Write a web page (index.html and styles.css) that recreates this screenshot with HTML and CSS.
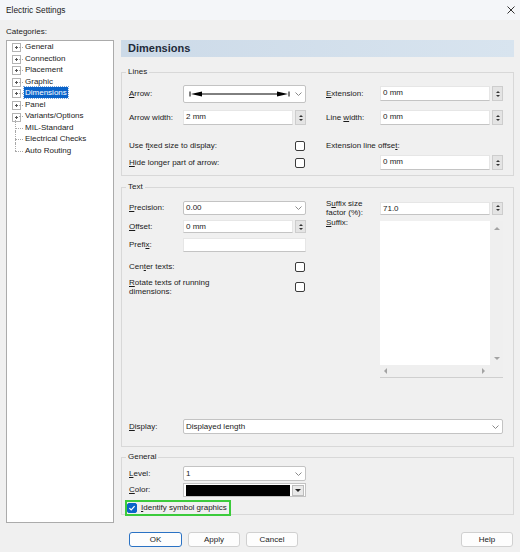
FILE: index.html
```html
<!DOCTYPE html>
<html lang="en">
<head>
	<meta charset="UTF-8">
	<title>Electric Settings</title>
	<link rel="stylesheet" href="styles.css">
</head>
<body>
	<div class="titlebar">
		<span class="title">Electric Settings</span>
		<svg class="close" width="8" height="8" viewBox="0 0 8 8"><path d="M0.5 0.5L7.5 7.5M7.5 0.5L0.5 7.5" stroke="#333" stroke-width="1"/></svg>
	</div>

	<div class="cat-label">Categories:</div>

	<div class="main">
		<ul class="tree">
			<li class="node"><span>General</span></li>
			<li class="node"><span>Connection</span></li>
			<li class="node"><span>Placement</span></li>
			<li class="node"><span>Graphic</span></li>
			<li class="node"><span class="sel">Dimensions</span></li>
			<li class="node"><span>Panel</span></li>
			<li class="node"><span>Variants/Options</span></li>
			<li class="leaf"><span>MIL-Standard</span></li>
			<li class="leaf"><span>Electrical Checks</span></li>
			<li class="leaf last"><span>Auto Routing</span></li>
		</ul>

		<div class="page">
			<div class="page-head">Dimensions</div>

			<!-- Lines -->
			<fieldset class="group lines">
				<legend>Lines</legend>
				<div class="row r1">
					<label><u>A</u>rrow:</label>
					<div class="combo arrow">
						<svg width="110" height="10" viewBox="0 0 110 10">
							<path d="M6 2.5v5M105 2.5v5M18 5H93" stroke="#000" stroke-width="1"/>
							<path d="M7 5L18 2.5V7.5Z M104 5L93 2.5V7.5Z" fill="#000"/>
						</svg>
						<svg class="chev" width="7" height="4" viewBox="0 0 7 4"><path d="M0.5 0.5 3.5 3.5 6.5 0.5" fill="none" stroke="#8a8a8a"/></svg>
					</div>
					<span></span>
					<label><u>E</u>xtension:</label>
					<div class="spin"><div class="field">0 mm</div><div class="btns"><i class="up"></i><i class="dn"></i></div></div>
				</div>
				<div class="row r2">
					<label>Arrow width:</label>
					<div class="spin"><div class="field">2 mm</div><div class="btns"><i class="up"></i><i class="dn"></i></div></div>
					<span></span>
					<label>Line <u>w</u>idth:</label>
					<div class="spin"><div class="field">0 mm</div><div class="btns"><i class="up"></i><i class="dn"></i></div></div>
				</div>
				<div class="row r3">
					<div class="check"><span>Use f<u>i</u>xed size to display:</span><i class="cb"></i></div>
					<span></span>
					<label class="wide">Extension line offse<u>t</u>:</label>
				</div>
				<div class="row r4">
					<div class="check"><span><u>H</u>ide longer part of arrow:</span><i class="cb"></i></div>
					<span></span>
					<span></span>
					<div class="spin"><div class="field">0 mm</div><div class="btns"><i class="up"></i><i class="dn"></i></div></div>
				</div>
			</fieldset>

			<!-- Text -->
			<fieldset class="group text">
				<legend>Text</legend>
				<div class="text-grid">
					<label class="c1 t1"><u>P</u>recision:</label>
					<div class="combo small c2 t1">0.00<svg class="chev" width="7" height="4" viewBox="0 0 7 4"><path d="M0.5 0.5 3.5 3.5 6.5 0.5" fill="none" stroke="#8a8a8a"/></svg></div>
					<label class="c4 t1 two">S<u>u</u>ffix size<br>factor (%):</label>
					<div class="spin small c5 t1"><div class="field">71.0</div><div class="btns"><i class="up"></i><i class="dn"></i></div></div>

					<label class="c1 t2"><u>O</u>ffset:</label>
					<div class="spin small c2 t2"><div class="field">0 mm</div><div class="btns"><i class="up"></i><i class="dn"></i></div></div>
					<label class="c4 t2 top"><u>S</u>uffix:</label>
					<div class="suffix c5">
						<div class="area"></div>
						<div class="vscroll"><i class="sa up"></i><i class="sa dn"></i></div>
						<div class="hscroll"><i class="sa lt"></i><i class="sa rt"></i></div>
						<div class="corner"></div>
					</div>

					<label class="c1 t3">Prefi<u>x</u>:</label>
					<div class="field c2 t3 tall"></div>

					<div class="check t4"><span>Cen<u>t</u>er texts:</span><i class="cb"></i></div>
					<div class="check t5"><span class="two"><u>R</u>otate texts of running<br>dimensions:</span><i class="cb"></i></div>

					<label class="c1 t7"><u>D</u>isplay:</label>
					<div class="combo display t7">Displayed length<svg class="chev" width="7" height="4" viewBox="0 0 7 4"><path d="M0.5 0.5 3.5 3.5 6.5 0.5" fill="none" stroke="#8a8a8a"/></svg></div>
				</div>
			</fieldset>

			<!-- General -->
			<fieldset class="group general">
				<legend>General</legend>
				<div class="row g1">
					<label><u>L</u>evel:</label>
					<div class="combo">1<svg class="chev" width="7" height="4" viewBox="0 0 7 4"><path d="M0.5 0.5 3.5 3.5 6.5 0.5" fill="none" stroke="#8a8a8a"/></svg></div>
				</div>
				<div class="row g2">
					<label><u>C</u>olor:</label>
					<div class="colorpick"><div class="swatch"></div><div class="drop"><i></i></div></div>
				</div>
				<div class="row g3">
					<div class="highlight">
						<i class="cb on"><svg width="10" height="10" viewBox="0 0 10 10"><path d="M2.4 5.2 4.2 7 7.6 3.2" fill="none" stroke="#fff" stroke-width="1.2"/></svg></i>
						<span><u>I</u>dentify symbol graphics</span>
					</div>
				</div>
			</fieldset>
		</div>
	</div>

	<div class="buttons">
		<span class="btn ok">OK</span>
		<span class="btn">Apply</span>
		<span class="btn">Cancel</span>
		<span class="btn help">Help</span>
	</div>
</body>
</html>
```

FILE: styles.css
```css
* {
	box-sizing: border-box;
}

body {
	margin: 0;
	width: 520px;
	height: 552px;
	overflow: hidden;
	background: #f0f0f0;
	font: 8px/10px "Liberation Sans", Arial, sans-serif;
	color: #1b1b1b;
}

u {
	text-decoration: underline;
}

label {
	white-space: nowrap;
}

/* title bar */
.titlebar {
	height: 20px;
	background: #f4f6f9;
	display: flex;
	align-items: center;
	justify-content: space-between;
	padding: 0 5px 0 6px;
}

.title {
	font-size: 8.3px;
}

.cat-label {
	padding: 6px 6px 2px;
	line-height: 12px;
}

.main {
	display: grid;
	grid-template-columns: 108px 393px;
	column-gap: 7px;
	padding: 0 6px;
}

/* category tree */
.tree {
	margin: 0;
	padding: 0;
	list-style: none;
	background: #fff;
	border: 1px solid #ababab;
	height: 483px;
}

.tree li {
	position: relative;
	height: 11.55px;
	line-height: 11.55px;
	padding-left: 17px;
	white-space: nowrap;
}

.tree li span {
	padding: 1px 1px;
}

.tree li .sel {
	background: #0a63c9;
	color: #fff;
	outline: 1px dotted #7aa7dd;
}

.tree .node::before {
	content: "";
	position: absolute;
	left: 5px;
	top: 2.3px;
	width: 7px;
	height: 7px;
	border: 1px solid #b4b4b4;
	background:
		linear-gradient(#555, #555) center / 3px 1px no-repeat,
		linear-gradient(#555, #555) center / 1px 3px no-repeat,
		#fff;
}

.tree .node::after {
	content: "";
	position: absolute;
	left: 12px;
	top: 6px;
	width: 4px;
	border-top: 1px dotted #a8a8a8;
}

.tree .leaf::before {
	content: "";
	position: absolute;
	left: 8px;
	top: -2px;
	height: calc(100% + 2px);
	border-left: 1px dotted #a8a8a8;
}

.tree .leaf.last::before {
	height: 8px;
}

.tree .leaf::after {
	content: "";
	position: absolute;
	left: 8px;
	top: 6px;
	width: 8px;
	border-top: 1px dotted #a8a8a8;
}

/* right page */
.page-head {
	height: 17px;
	background: linear-gradient(90deg, #ccdae8, #d8e4ef);
	font: bold 11px/17px "Liberation Sans", Arial, sans-serif;
	color: #1f2b3a;
	padding-left: 7px;
}

.group {
	margin: 10px 0 0;
	padding: 7px 10px 4px 7px;
	border: 1px solid #d8d8d8;
	min-width: 0;
}

.group legend {
	padding: 0 2px;
	margin-left: -3px;
	line-height: 10px;
}

.group.text {
	margin-top: 6px;
	padding-bottom: 10px;
}

.group.general {
	margin-top: 5px;
	padding-top: 3px;
	padding-bottom: 0;
}

.row {
	display: grid;
	grid-template-columns: 54px 123px 20px 54px 123px;
	align-items: center;
}

.r1 {
	height: 19px;
}

.r2 {
	height: 19px;
	margin-top: 5px;
}

.r3 {
	height: 16px;
	margin-top: 11px;
}

.r4 {
	height: 17px;
}

.g1 {
	height: 17px;
}

.g2 {
	height: 16px;
}

.g3 {
	height: 16px;
}

.wide {
	grid-column: 4 / 6;
}

.check {
	grid-column: 1 / 3;
	display: flex;
	align-items: center;
	justify-content: space-between;
	padding-right: 1px;
}

/* controls */
.field {
	height: 15px;
	background: #fff;
	border: 1px solid #e6e6e6;
	border-bottom-color: #c4c4c4;
	padding-left: 2px;
	line-height: 13px;
}

.field.tall {
	height: 14px;
}

.combo {
	height: 15px;
	background: #fff;
	border: 1px solid #c3c3c3;
	border-radius: 2px;
	display: flex;
	align-items: center;
	padding-left: 2px;
}

.combo.arrow {
	height: 18px;
	padding-left: 0;
}

.combo.small {
	height: 14px;
}

.combo .chev {
	margin-left: auto;
	margin-right: 3px;
}

.spin {
	display: flex;
	height: 15px;
}

.spin.small {
	height: 13px;
}

.spin .field {
	flex: 1;
	height: 100%;
	line-height: 12px;
}

.spin .btns {
	width: 11px;
	margin-left: 2px;
	background: #e4e4e4;
	border: 1px solid #cdcdcd;
	display: flex;
	flex-direction: column;
	align-items: center;
	justify-content: center;
	gap: 2px;
}

.btns i {
	display: block;
	width: 0;
	height: 0;
	border-left: 2px solid transparent;
	border-right: 2px solid transparent;
}

.btns .up {
	border-bottom: 2px solid #333;
}

.btns .dn {
	border-top: 2px solid #333;
}

.cb {
	display: block;
	flex: none;
	width: 10px;
	height: 10px;
	border: 1px solid #3b3b3b;
	border-radius: 2px;
	background: #fff;
}

.cb.on {
	background: #0a63c9;
	border-color: #0a63c9;
}

.cb.on svg {
	display: block;
	margin: -1px;
}

/* text group */
.text-grid {
	display: grid;
	grid-template-columns: 54px 123px 20px 54px 123px;
	grid-template-rows: 18px 19px 18px 26px 14px 123px 19px;
	align-items: center;
}

.c1 { grid-column: 1; }
.c2 { grid-column: 2; }
.c4 { grid-column: 4; }
.c5 { grid-column: 5; }
.t1 { grid-row: 1; }
.t2 { grid-row: 2; }
.t3 { grid-row: 3; }
.t4 { grid-row: 4; }
.t5 { grid-row: 5; }
.t7 { grid-row: 7; }

.two {
	line-height: 9px;
}

.top {
	align-self: start;
	margin-top: 1px;
}

.display {
	grid-column: 2 / 6;
}

.suffix {
	grid-row: 2 / 7;
	align-self: start;
	margin-top: 4px;
	height: 157px;
	display: grid;
	grid-template-columns: 1fr 13px;
	grid-template-rows: 1fr 12px;
	background: #fff;
	border-bottom: 1px solid #cfcfcf;
}

.vscroll,
.hscroll,
.corner {
	background: #efefef;
	display: flex;
	justify-content: space-between;
	align-items: center;
}

.vscroll {
	flex-direction: column;
	padding: 6px 0 5px;
}

.hscroll {
	padding: 0 5px 0 4px;
}

.sa {
	display: block;
	width: 0;
	height: 0;
}

.sa.up {
	border-left: 3px solid transparent;
	border-right: 3px solid transparent;
	border-bottom: 3px solid #a3a3a3;
}

.sa.dn {
	border-left: 3px solid transparent;
	border-right: 3px solid transparent;
	border-top: 3px solid #a3a3a3;
}

.sa.lt {
	border-top: 3px solid transparent;
	border-bottom: 3px solid transparent;
	border-right: 3px solid #a3a3a3;
}

.sa.rt {
	border-top: 3px solid transparent;
	border-bottom: 3px solid transparent;
	border-left: 3px solid #a3a3a3;
}

/* general group */
.colorpick {
	height: 14px;
	display: flex;
	background: #fff;
	border: 1px solid #c3c3c3;
	padding: 1px 1px 0 2px;
}

.swatch {
	flex: 1;
	background: #000;
}

.drop {
	width: 12px;
	margin-left: 2px;
	background: #e9e9e9;
	border: 1px solid #bdbdbd;
	display: flex;
	align-items: center;
	justify-content: center;
}

.drop i {
	display: block;
	width: 0;
	height: 0;
	border-left: 3px solid transparent;
	border-right: 3px solid transparent;
	border-top: 3px solid #222;
}

.highlight {
	grid-column: 1 / 4;
	justify-self: start;
	display: flex;
	align-items: center;
	gap: 4px;
	height: 16px;
	padding-right: 2px;
	margin: 2px 0 -2px -4px;
	border: 2px solid #3ccb3c;
	white-space: nowrap;
}

/* buttons */
.buttons {
	display: flex;
	gap: 6px;
	margin-top: 9px;
	padding: 0 7px 0 129px;
}

.btn {
	width: 52px;
	height: 15px;
	line-height: 13px;
	text-align: center;
	background: #fdfdfd;
	border: 1px solid #d0d0d0;
	border-radius: 3px;
}

.btn.ok {
	width: 53px;
	border-color: #2a72c4;
}

.btn.help {
	margin-left: auto;
}
```
